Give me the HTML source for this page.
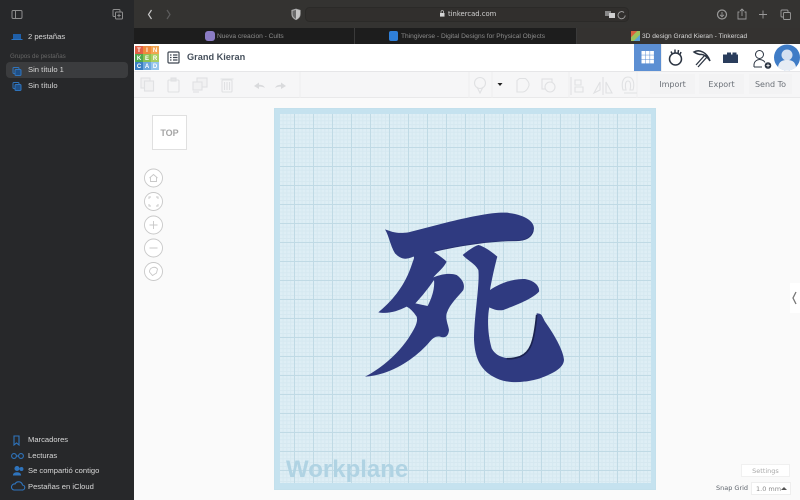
<!DOCTYPE html>
<html><head><meta charset="utf-8">
<style>
*{box-sizing:border-box}
html,body{margin:0;padding:0;width:800px;height:500px;overflow:hidden;background:#fafafa;font-family:"Liberation Sans","DejaVu Sans",sans-serif}
#all{position:absolute;left:0;top:0;width:800px;height:500px;filter:blur(.3px)}
.a{position:absolute}
#side{left:0;top:0;width:134px;height:500px;background:#27282a}
.st{position:absolute;left:28px;font-size:7.600px;color:#d8d8d8;white-space:nowrap;line-height:10px}
#top{left:134px;top:0;width:666px;height:28px;background:#343331}
#tabs{left:134px;top:28px;width:666px;height:16px;background:#343230}
.tab{position:absolute;top:0;height:16px;background:#1d1d1d;border-right:1px solid #3a3a3a;font-size:6.600px;color:#8c8c8c;line-height:17px;white-space:nowrap}
#hdr{left:134px;top:44px;width:666px;height:27px;background:#fff}
#tool{left:134px;top:71px;width:666px;height:27px;background:#f6f6f7;border-top:1px solid #e6e6e8;border-bottom:1px solid #e9e9ea}
.btn{position:absolute;top:74px;height:20px;background:#f3f3f4;color:#6b7077;font-size:8px;line-height:21px;text-align:center;font-family:"DejaVu Sans",sans-serif}
#wp{left:274px;top:108px;width:382px;height:382px;background-color:#deeef5;border:1px solid #c3e0ec;overflow:hidden}
#grid{position:absolute;inset:0;background-image:
linear-gradient(#c0dae5 1px,transparent 1px),linear-gradient(90deg,#c0dae5 1px,transparent 1px),
linear-gradient(#d5e8f0 1px,transparent 1px),linear-gradient(90deg,#d5e8f0 1px,transparent 1px);
background-size:19px 19px,19px 19px,3.8px 3.8px,3.8px 3.8px;background-position:0 0}
#edge{position:absolute;inset:0;border:solid #c5e2ef;border-width:5px 4px 6px 5px}
</style></head><body><div id="all">

<div class="a" id="side">
<svg class="a" style="left:0;top:0" width="134" height="100" fill="none" stroke="#8d8d8d" stroke-width="1">
<rect x="12" y="10.500" width="10" height="8" rx="1.200"/><path d="M15.500 10.500v8"/>
<rect x="113" y="9.500" width="7" height="7" rx="1"/><rect x="115.500" y="12" width="7" height="7" rx="1" fill="#27282a"/><path d="M119 13.800v3.400M117.300 15.500h3.400"/>
<rect x="13" y="34" width="8" height="5" fill="#1f5fa8" stroke="none"/><path d="M11.500 39.500h11" stroke="#2a74c4"/>
</svg>
<div class="st" style="top:32px">2 pestañas</div>
<div class="st" style="left:10px;top:52px;font-size:6.200px;color:#676767">Grupos de pestañas</div>
<div class="a" style="left:6px;top:62px;width:122px;height:16px;background:#3b3c3e;border-radius:4px"></div>
<svg class="a" style="left:0;top:60px" width="30" height="36" fill="none" stroke="#2f74bd" stroke-width="1">
<rect x="13" y="7.500" width="6" height="6" rx="1"/><rect x="15" y="9.500" width="6" height="6" rx="1" fill="#1f4f86"/>
<rect x="13" y="22.500" width="6" height="6" rx="1"/><rect x="15" y="24.500" width="6" height="6" rx="1" fill="#1f4f86"/>
</svg>
<div class="st" style="top:65px">Sin título 1</div>
<div class="st" style="top:81px">Sin título</div>
<svg class="a" style="left:8px;top:432px" width="20" height="64" fill="none" stroke="#2f74bd" stroke-width="1.100">
<path d="M6 4h5v9l-2.500-2L6 13z"/>
<circle cx="6" cy="24" r="2.400"/><circle cx="13" cy="24" r="2.400"/><path d="M8.400 24h2.200"/>
<circle cx="9" cy="36.500" r="2" fill="#2f74bd"/><path d="M5.500 43c0-3 7-3 7 0z" fill="#2f74bd"/><circle cx="13.500" cy="37" r="1.400" fill="#2f74bd"/>
<path d="M6 58h8a2.500 2.500 0 0 0 .5-5 4 4 0 0 0-7.500-1 3 3 0 0 0-1 6z"/>
</svg>
<div class="st" style="top:435px">Marcadores</div>
<div class="st" style="top:451px">Lecturas</div>
<div class="st" style="top:466px">Se compartió contigo</div>
<div class="st" style="top:482px">Pestañas en iCloud</div>
</div>

<div class="a" id="top">
<svg class="a" style="left:0;top:0" width="666" height="28" fill="none" stroke="#9a9a9a" stroke-width="1.200">
<path d="M17.500 10l-3 4.500 3 4.500" stroke="#c8c8c8"/><path d="M33 10l3 4.500-3 4.500" stroke="#5c5c5c"/>
<path d="M158 10.500l4-1.200 4 1.200v3.500c0 2.500-2 4.500-4 5.500-2-1-4-3-4-5.500z" fill="#6a6a6a" stroke="#a8a8a8"/><path d="M162 9.500v10c2-1 4-3 4-5.500v-3.500z" fill="#c4c4c4" stroke="none"/>
<rect x="171.500" y="7.500" width="323" height="14" rx="4" fill="#312f2d" stroke="#2b2a28" stroke-width="1"/>
<rect x="306" y="13" width="4.500" height="3.600" fill="#d6d6d6" stroke="none"/><path d="M307 13v-1.200a1.200 1.200 0 0 1 2.500 0V13" stroke="#d6d6d6" stroke-width=".7"/>
<rect x="471" y="11" width="6" height="5" fill="#888" stroke="none"/><rect x="475" y="13" width="6" height="5" fill="#cfcfcf" stroke="none"/>
<path d="M490 12.500a3.600 3.600 0 1 0 1.200 3" stroke="#a8a8a8" stroke-width=".9"/>
<circle cx="588" cy="14.500" r="4.500"/><path d="M588 12v4.500M586 14.800l2 2 2-2" stroke-width=".9"/>
<path d="M605.500 12h-1.500v7h8v-7h-1.500M608 16V9.500M606 11l2-2 2 2" stroke-width=".9"/>
<path d="M629 10.500v8M625 14.500h8" stroke-width=".9"/>
<rect x="647" y="10" width="7" height="7" rx="1" stroke-width=".9"/><rect x="649.500" y="12.500" width="7" height="7" rx="1" fill="#343331" stroke-width=".9"/>
</svg>
<div class="a" style="left:314px;top:9px;line-height:11px;color:#d2d2d2;font-family:'DejaVu Sans',sans-serif;font-size:6.800px">tinkercad.com</div>
</div>

<div class="a" id="tabs">
<div class="tab" style="left:0;width:221px;padding-left:83px">Nueva creacion - Cults</div>
<div class="tab" style="left:221px;width:222px;padding-left:46px">Thingiverse - Digital Designs for Physical Objects</div>
<div class="a" style="left:508px;top:0;font-size:6.600px;line-height:17px;color:#d8d8d8;white-space:nowrap">3D design Grand Kieran - Tinkercad</div>
<div class="a" style="left:71px;top:3px;width:10px;height:10px;border-radius:3px;background:#8b7cc4"></div>
<div class="a" style="left:255px;top:3px;width:9px;height:10px;border-radius:2px;background:#2f7fd8"></div>
<div class="a" style="left:497px;top:3px;width:9px;height:10px;background:linear-gradient(135deg,#d9623f 0 33%,#9cc25c 33% 66%,#5aa6d6 66%)"></div>
</div>

<div class="a" id="hdr">
<div class="a" style="left:53px;top:7px;font-size:9.200px;line-height:13px;font-family:'Liberation Sans',sans-serif;color:#46505c;font-weight:700">Grand Kieran</div>
<svg class="a" style="left:33px;top:7px" width="14" height="13" fill="none" stroke="#3e4650" stroke-width="1.200"><rect x="1" y="1" width="11" height="11" rx="1"/><path d="M3 4h1.500M6 4h4.500M3 6.500h1.500M6 6.500h4.500M3 9h1.500M6 9h4.500"/></svg>
<div class="a" style="left:500px;top:0;width:27px;height:27px;background:#5c8fd3"></div>
<div class="a" style="left:527px;top:0;width:1px;height:27px;background:#eee"></div>
<svg class="a" style="left:500px;top:0" width="166" height="27" fill="none" stroke="#2b3442" stroke-width="1.500">
<g fill="#fff" stroke="none"><rect x="7.500" y="7" width="3.800" height="3.800"/><rect x="11.800" y="7" width="3.800" height="3.800"/><rect x="16.100" y="7" width="3.800" height="3.800"/><rect x="7.500" y="11.300" width="3.800" height="3.800"/><rect x="11.800" y="11.300" width="3.800" height="3.800"/><rect x="16.100" y="11.300" width="3.800" height="3.800"/><rect x="7.500" y="15.600" width="3.800" height="3.800"/><rect x="11.800" y="15.600" width="3.800" height="3.800"/><rect x="16.100" y="15.600" width="3.800" height="3.800"/></g>
<circle cx="41.500" cy="15" r="6"/><path d="M37 7.500l1.500 3M41 5.500v4M44.500 6l-.5 3.500M47 8l-1 2.500"/>
<path d="M62 21l9-10M64 23l9-10" stroke-width="1.300"/><path d="M60 8c5-3 13 0 16 9-3-5-7-7-10-6.500-2-.5-4-1-6-2.500z" fill="#fff"/>
<path d="M89 10.500h4v-2h4v2h1.500v-2h4v2h1.500v8.500h-15z" fill="#2a3d5c" stroke="none"/>
<circle cx="125.500" cy="10.500" r="4" stroke-width="1"/><path d="M120 23v-2c0-3.500 3-5.500 5.500-5.500s5 1.500 5.500 3M120 23h8" stroke-width="1"/>
<circle cx="134" cy="21.500" r="3.300" fill="#2b3442" stroke="none"/><path d="M134 19.800v3.400M132.300 21.500h3.400" stroke="#fff" stroke-width=".8"/>
<circle cx="153" cy="13.500" r="13" fill="#3f7cc6" stroke="none"/>
<circle cx="153" cy="11" r="5.500" fill="#d4e0f0" stroke="none"/><path d="M144 23c1-6 5-7 9-7s8 1 9 7c-2.500 2.500-5.500 3.500-9 3.500s-6.500-1-9-3.500z" fill="#e6ecf4" stroke="none"/>
</svg>
</div>

<svg class="a" style="left:135px;top:46px" width="24" height="24" font-family="Liberation Sans" font-size="6" font-weight="700" text-anchor="middle" fill="#fff">
<rect width="8" height="8" fill="#e15f45"/><rect x="8" width="8" height="8" fill="#ee8a3d"/><rect x="16" width="8" height="8" fill="#f2a550"/>
<rect y="8" width="8" height="8" fill="#4fa84f"/><rect x="8" y="8" width="8" height="8" fill="#8cc152"/><rect x="16" y="8" width="8" height="8" fill="#a9ce62"/>
<rect y="16" width="8" height="8" fill="#3b7fc2"/><rect x="8" y="16" width="8" height="8" fill="#6fa8dc"/><rect x="16" y="16" width="8" height="8" fill="#94c4ea"/>
<text x="4" y="6.200">T</text><text x="12" y="6.200">I</text><text x="20" y="6.200">N</text><text x="4" y="14.200">K</text><text x="12" y="14.200">E</text><text x="20" y="14.200">R</text><text x="4" y="22.200">C</text><text x="12" y="22.200">A</text><text x="20" y="22.200">D</text>
</svg>

<div class="a" id="tool">
<svg class="a" style="left:0;top:0" width="666" height="26" fill="none" stroke="#e0e1e3" stroke-width="1.100">
<rect x="7" y="6" width="9" height="10" fill="#f1f1f2"/><rect x="10.500" y="9" width="9" height="10" fill="#f1f1f2"/>
<rect x="34" y="8" width="11" height="12" rx="1"/><rect x="37" y="6" width="5" height="3" fill="#e6e6e7"/>
<rect x="63" y="6" width="10" height="9" fill="#f1f1f2"/><rect x="59" y="10" width="9" height="8" fill="#f1f1f2"/><path d="M59 20h6"/>
<rect x="88" y="8" width="10" height="12" rx="1"/><path d="M86.500 7h13M90.500 10v8M93 10v8M95.500 10v8"/>
<path d="M120 14l5-3.500v2.300c3 0 5 1 6 3-2-1-4-1.200-6-1.200v2.400z" fill="#d9dadc" stroke="none"/>
<path d="M152 14l-5-3.500v2.300c-3 0-5 1-6 3 2-1 4-1.200 6-1.200v2.400z" fill="#d9dadc" stroke="none"/>
<path d="M166 0v26M335 0v26M358 0v26M503 0v26M435 0v26" stroke="#eeeeef" stroke-width="1"/>
<circle cx="346" cy="11" r="5.500"/><path d="M343 15l3 6 3-6"/>
<path d="M363 11.500l3.500-3.500-1.500 0z" stroke="none"/>
<path d="M363.500 11h5l-2.500 3z" fill="#222" stroke="none"/>
<path d="M363 8.500l2.500-2h6c2 2 4 4 3.500 7-1 3-3 6-6 6.500h-6z" transform="translate(20,0)"/>
<rect x="408" y="7" width="10" height="10"/><circle cx="416" cy="15" r="5" fill="#f6f6f7"/>
<path d="M437 5v18M441 8h6v5h-6zM441 15h8v5h-8z"/>
<path d="M469 5v18M466 18l-6 3 6-11zM472 10l6 11h-6z"/>
<path d="M489 18c-2-7 0-13 5-13s7 6 5 13h-3c1-4 1-9-2-9s-3 5-2 9zM490 21h13"/>
</svg>
</div>
<div class="btn" style="left:650px;width:45px">Import</div>
<div class="btn" style="left:699px;width:45px">Export</div>
<div class="btn" style="left:749px;width:43px">Send To</div>

<div class="a" style="left:152px;top:115px;width:35px;height:35px;background:#fff;border:1px solid #e0e0e0;font:700 9px/34px 'Liberation Sans',sans-serif;text-align:center;color:#a5a5a5">TOP</div>

<svg class="a" style="left:143px;top:167px" width="22" height="116" fill="#fff" stroke="#c8c8c8" stroke-width=".9">
<circle cx="10.500" cy="11" r="9"/><circle cx="10.500" cy="34.500" r="9"/><circle cx="10.500" cy="58" r="9"/><circle cx="10.500" cy="81" r="9"/><circle cx="10.500" cy="104.500" r="9"/>
<path d="M6.500 11l4-3.500 4 3.500M7.500 10.500v4h6v-4" fill="none"/>
<path d="M6 32v-2h2M13 30h2v2M15 37v2h-2M8 39H6v-2" fill="none"/>
<path d="M10.500 54v8M6.500 58h8M6.500 81h8" fill="none"/>
<path d="M6.500 105a4.500 4.500 0 0 1 8-3l-1 4-4 2.500z" fill="none"/>
</svg>

<div class="a" id="wp">
<div id="grid"></div><div id="edge"></div>
<div class="a" style="left:11px;top:346px;font:700 24px/30px 'Liberation Sans',sans-serif;color:#b0d3e3;white-space:nowrap">Workplane</div>
</div>

<svg class="a" style="left:350px;top:200px" width="230" height="190" viewBox="0 0 690 570">
<path fill="#2f3a80" fill-rule="evenodd" d="M105 88C125 95 140 102 175 97L300 65C370 48 430 36 470 38 515 42 552 60 552 85 550 110 530 122 500 122 430 122 330 135 250 155 265 165 280 175 290 185 280 205 265 215 250 232 275 222 300 218 320 225 340 240 345 255 340 270 325 290 300 310 290 340 285 355 295 375 297 390 295 410 285 415 270 410 255 408 248 415 235 430 190 480 120 525 45 530 95 505 145 460 175 415 195 385 205 365 200 350 190 335 180 325 170 320 140 335 115 342 85 337 130 300 165 255 185 195 190 180 195 170 190 170 165 182 150 175 135 160 120 135 118 110 105 88ZM252 240C235 265 215 290 196 310L233 318C245 295 255 265 252 240Z"/>
<path fill="#2f3a80" d="M338 165C350 155 370 140 385 135 400 138 425 155 442 170 435 195 425 240 420 270 450 250 490 235 525 237 555 242 570 260 567 275 550 295 500 315 460 330 445 333 430 328 418 322 412 350 412 400 425 445 440 475 480 480 510 470 540 458 552 430 560 340 575 340 575 345 585 365 610 400 640 450 642 480 640 505 610 520 570 535 520 550 470 550 440 535 395 515 375 480 372 420 372 350 390 250 385 210 375 190 350 180 338 165Z"/>
<path d="M470 476C485 477 498 474 510 470 540 458 552 430 560 345" fill="none" stroke="#1b2350" stroke-width="5"/>
<path d="M250 155C330 135 430 122 500 122 530 122 545 110 550 92" fill="none" stroke="#262f6c" stroke-width="2.500"/>
</svg>

<svg class="a" style="left:788px;top:283px" width="12" height="30"><rect x="2" y="0" width="10" height="30" fill="#fff"/><path d="M8 9l-3 6 3 6" fill="none" stroke="#777" stroke-width="1.300"/></svg>

<div class="a" style="left:741px;top:464px;width:49px;height:13px;background:#fff;border:1px solid #f0f0f0;font:6.500px/12px 'DejaVu Sans',sans-serif;color:#a9a9a9;text-align:center">Settings</div>
<div class="a" style="left:716px;top:483px;font:6.500px/10px 'DejaVu Sans',sans-serif;color:#5e646c;white-space:nowrap">Snap Grid</div>
<div class="a" style="left:751px;top:482px;width:40px;height:13px;background:#fff;border:1px solid #eee;font:6.500px/12px 'DejaVu Sans',sans-serif;color:#8a8a8a;padding-left:4px;white-space:nowrap">1.0 mm</div>
<svg class="a" style="left:781px;top:486px" width="6" height="5"><path d="M0 4l3-3 3 3z" fill="#555"/></svg>
</div></body></html>
